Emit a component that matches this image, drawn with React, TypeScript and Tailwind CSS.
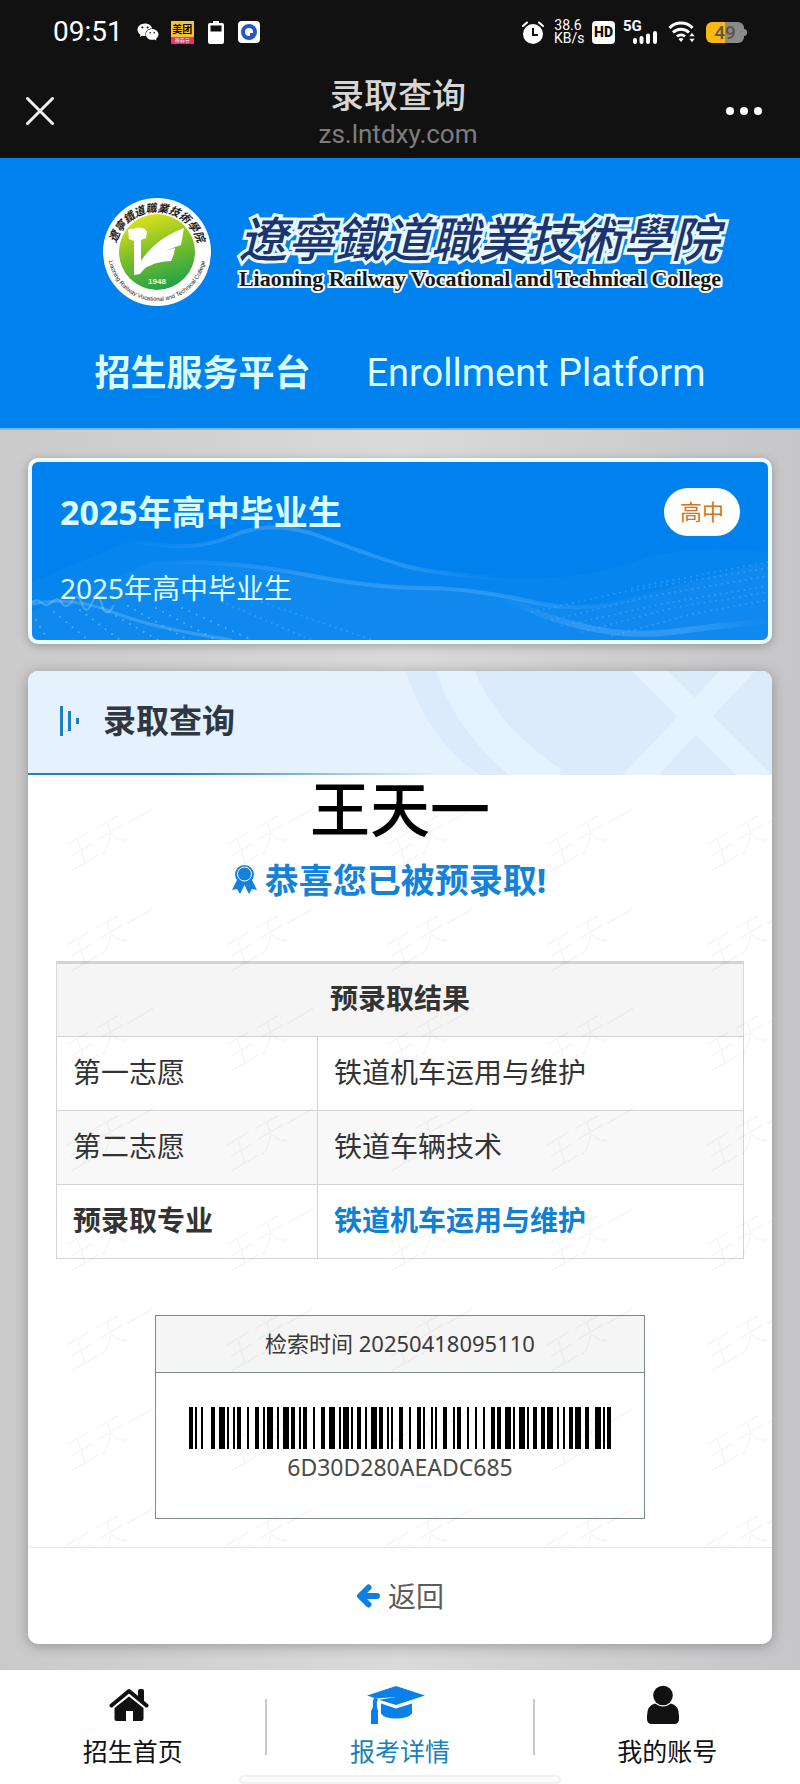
import { FaWeixin } from "react-icons/fa";

const WATERMARK = "王天一";
const SERIAL = "6D30D280AEADC685";

const CODE128: Record<string, string> = {
  "0": "123122",
  "2": "223211",
  "3": "221132",
  "5": "213212",
  "6": "223112",
  "8": "311222",
  A: "111323",
  C: "131321",
  D: "112313",
  E: "132113",
};
const START_B = "211214";
const CHECK = "122132";
const STOP = "2331112";

function getBars(text: string) {
  const widths = START_B + text.split("").map((c) => CODE128[c]).join("") + CHECK + STOP;
  const bars: { x: number; w: number }[] = [];
  let x = 0;
  widths.split("").forEach((d, i) => {
    if (i % 2 === 0) bars.push({ x, w: Number(d) });
    x += Number(d);
  });
  return { bars, total: x };
}

function Barcode({ text }: { text: string }) {
  const { bars, total } = getBars(text);
  return (
    <svg viewBox={`0 0 ${total} 21`} preserveAspectRatio="none" className="w-[422px] h-[42px]" shapeRendering="crispEdges" aria-hidden>
      {bars.map((b) => (
        <rect key={b.x} x={b.x} y="0" width={b.w} height="21" fill="#000" />
      ))}
    </svg>
  );
}

function StatusBar() {
  return (
    <div className="flex items-center justify-between h-16 px-[53px] text-white">
      <div className="flex items-center">
        <span className="text-[28px] leading-8 font-[Roboto]">09:51</span>
        <FaWeixin size={22} className="ml-[14px]" />
        <div className="ml-3 flex flex-col w-[23px] h-[23px] overflow-hidden bg-[#f5c433] text-center text-black">
          <span className="text-[10px] leading-4 font-bold">美团</span>
          <span className="h-[7px] bg-[#e8336d] text-white text-[5px] leading-[7px]">神券节</span>
        </div>
        <svg viewBox="0 0 16 23" className="ml-[14px] w-4 h-[23px]" aria-hidden>
          <path d="M5 0h6v2h3a2 2 0 0 1 2 2v17a2 2 0 0 1-2 2H2a2 2 0 0 1-2-2V4a2 2 0 0 1 2-2h3z" fill="#fff" />
          <rect x="2.500" y="4.500" width="11" height="6" fill="#111" />
        </svg>
        <svg viewBox="0 0 22 22" className="ml-[14px] w-[22px] h-[22px]" aria-hidden>
          <rect width="22" height="22" rx="4" fill="#fff" />
          <circle cx="11" cy="11" r="8" fill="#2458c8" />
          <path d="M11 7a4 4 0 1 1-4 4 4 4 0 0 1 4-4z" fill="#fff" />
          <path d="M12 12h4l-2 3h-2z" fill="#2458c8" />
        </svg>
      </div>

      <div className="flex items-center">
        <svg viewBox="0 0 22 23" className="w-[22px] h-[23px]" aria-hidden>
          <circle cx="11" cy="13" r="10" fill="#fff" />
          <path d="M1 5l4-3.500M21 5l-4-3.500" stroke="#fff" strokeWidth="2" strokeLinecap="round" />
          <path d="M11 7v7h5" stroke="#111" strokeWidth="2" fill="none" />
        </svg>
        <div className="ml-[10px] w-7 text-center text-[14px] leading-[13px] font-[Roboto]">
          <div>38.6</div>
          <div>KB/s</div>
        </div>
        <span className="ml-[10px] w-[23px] h-[23px] rounded bg-white text-center text-[14px] leading-[23px] font-[Roboto] font-black text-[#111]">
          HD
        </span>
        <div className="ml-2 flex items-end w-9 h-[23px]">
          <span className="self-start text-[15px] leading-[11px] font-[Roboto] font-bold">5G</span>
          <svg viewBox="0 0 26 13" className="-ml-[9px] w-[26px] h-[13px] shrink-0" aria-hidden>
            <path d="M2 9v2M8.500 7v4M15 4.500v6.500M22 2v9" stroke="#fff" strokeWidth="4" strokeLinecap="round" />
          </svg>
        </div>
        <svg viewBox="0 0 28 22" className="ml-[9px] w-7 h-[22px]" fill="none" aria-hidden>
          <path d="M1.500 7a16 16 0 0 1 23 0M5 11.500a11.500 11.500 0 0 1 16 0M9 15.500a6 6 0 0 1 8 0" stroke="#fff" strokeWidth="3" />
          <path d="M10.500 18a4 4 0 0 1 5 0L13 21z" fill="#fff" />
          <path d="M21 15.500l3-4 3 4zM21 17.500l3 4 3-4z" fill="#fff" stroke="#111" strokeWidth="0.500" />
        </svg>
        <div className="ml-[10px] flex items-center">
          <div className="w-[38px] h-[21px] rounded-md bg-linear-to-r from-[#fbb90f] from-50% to-[#8b8b8b] to-50% text-center text-[19px] leading-[21px] font-[Roboto] font-medium text-[#5b5548]">
            49
          </div>
          <div className="w-[3px] h-[7px] rounded-r-full bg-[#8b8b8b]" />
        </div>
      </div>
    </div>
  );
}

function TitleBar() {
  return (
    <div className="flex items-center justify-between h-[94px] px-[26px]">
      <button type="button" aria-label="关闭">
        <svg viewBox="0 0 28 28" className="w-7 h-7" aria-hidden>
          <path d="M1.500 1.500l25 25M26.500 1.500l-25 25" stroke="#f0f0f0" strokeWidth="3" strokeLinecap="round" />
        </svg>
      </button>
      <div className="text-center pl-4">
        <h1 className="text-[34px] leading-[46px] font-medium text-[#d6d6d6]">录取查询</h1>
        <p className="text-[26px] leading-8 font-[Roboto] text-[#7d7d7d]">zs.lntdxy.com</p>
      </div>
      <button type="button" aria-label="更多" className="mr-3 flex gap-[6px]">
        <span className="w-2 h-2 rounded-full bg-white" />
        <span className="w-2 h-2 rounded-full bg-white" />
        <span className="w-2 h-2 rounded-full bg-white" />
      </button>
    </div>
  );
}

function SchoolLogo() {
  return (
    <svg viewBox="0 0 108 108" className="w-[108px] h-[108px] shrink-0" aria-hidden>
      <defs>
        <linearGradient id="logo-fill" x1="0.300" y1="0" x2="0.600" y2="1">
          <stop offset="0" stopColor="#e3e21a" />
          <stop offset="0.500" stopColor="#79bf2a" />
          <stop offset="1" stopColor="#1fa04a" />
        </linearGradient>
        <path id="logo-top" d="M12 56a42 42 0 0 1 84 0" />
        <path id="logo-bottom" d="M5 54a49 49 0 0 0 98 0" />
      </defs>
      <circle cx="54" cy="54" r="54" fill="#fff" />
      <circle cx="54" cy="54" r="38" fill="url(#logo-fill)" />
      <text fontSize="11" fontWeight="700" fontStyle="italic" fill="#222">
        <textPath href="#logo-top" startOffset="50%" textAnchor="middle">遼寧鐵道職業技術學院</textPath>
      </text>
      <text fontSize="6" fontFamily="Liberation Sans" fill="#222">
        <textPath href="#logo-bottom" startOffset="50%" textAnchor="middle">
          Liaoning Railway Vocational and Technical College
        </textPath>
      </text>
      {/* hammer head and handle, then the two wing strokes */}
      <path d="M25 32q2-2 5-1 6-3 12 0l2 3-1 6-5 2v21q14-22 43-33l-3 17q-26 8-41 29l-6 1V43l-5-2z" fill="#fff" />
      <path d="M38 73q12-18 34-23-1 8-4 13-17 0-30 10z" fill="#fff" />
      <text x="54" y="86" fontSize="8" fontWeight="700" textAnchor="middle" fontFamily="Liberation Sans" fill="#eaffd0">
        1948
      </text>
    </svg>
  );
}

function Banner() {
  return (
    <header className="h-[272px] bg-[#0082ee] border-b-2 border-[#7db9e6] pt-10">
      <div className="flex items-center justify-center gap-7 pl-6">
        <SchoolLogo />
        <div className="whitespace-nowrap">
          <p className="text-[48px] leading-[54px] font-medium italic text-[#1c3570] [-webkit-text-stroke:6px_#e8faff] [paint-order:stroke_fill]">
            遼寧鐵道職業技術學院
          </p>
          <p className="text-[22px] leading-[26px] font-bold font-[Liberation_Serif] text-[#161616] [-webkit-text-stroke:4px_#f4fbff] [paint-order:stroke_fill]">
            Liaoning Railway Vocational and Technical College
          </p>
        </div>
      </div>
      <div className="mt-11 flex items-center justify-center gap-14 text-[#dcfdff]">
        <h2 className="text-4xl leading-[46px] font-bold">招生服务平台</h2>
        <p className="text-[38px] leading-[46px] font-[Roboto]">Enrollment Platform</p>
      </div>
    </header>
  );
}

function Waves() {
  return (
    <svg viewBox="0 0 736 178" preserveAspectRatio="none" className="absolute inset-0 w-full h-full" fill="none" aria-hidden>
      <defs>
        <linearGradient id="wave-line" x1="0" x2="1" y1="0" y2="0">
          <stop offset="0" stopColor="#5fb1f6" stopOpacity="0" />
          <stop offset="0.300" stopColor="#5fb1f6" stopOpacity="0.400" />
          <stop offset="0.700" stopColor="#5fb1f6" stopOpacity="0.400" />
          <stop offset="1" stopColor="#5fb1f6" stopOpacity="0" />
        </linearGradient>
      </defs>
      <path d="M0 120L100 78Q160 92 200 74T290 75 370 103 470 116 600 100 736 90V178H0z" fill="#3c9df0" fillOpacity="0.120" />
      <path d="M0 150L120 100Q200 98 270 112T390 126 500 140 620 130L736 100V178H0z" fill="#3c9df0" fillOpacity="0.180" />
      <path d="M100 78Q160 92 200 74T290 75 370 103 470 116" stroke="url(#wave-line)" strokeWidth="4" />
      <path d="M120 100Q200 98 270 112T390 126 500 140 620 130" stroke="url(#wave-line)" strokeWidth="4" />
      <path d="M470 135Q560 180 640 170T736 160" stroke="url(#wave-line)" strokeWidth="6" />
      <path d="M0 142Q40 134 80 150T200 178" stroke="#6cbbf8" strokeOpacity="0.400" strokeWidth="3" />
      <path d="M0 140q6-4 10 1t10-1 10 1 10-2 10 3 10-1 10 2 12 0" stroke="#8fd0fb" strokeOpacity="0.400" strokeWidth="2" />
      <g stroke="#8fd0fb" strokeOpacity="0.550" strokeWidth="2" strokeLinecap="round" strokeDasharray="0 8">
        <path d="M4 158l12 20M22 150l34 28M48 148l40 30M70 146l56 32M96 144l60 34M124 146l60 32M150 146l70 32" />
      </g>
      <g stroke="#7cc3f8" strokeOpacity="0.300" strokeWidth="2" strokeLinecap="round" strokeDasharray="0 6">
        <path d="M190 140l90 38M230 140l110 38M500 150l90-20 146-24M520 158l100-24 116-20M530 164l100-22 106-18M550 170l90-24 96-16M580 174l80-22 76-14M600 126l136-26" />
      </g>
    </svg>
  );
}

function BatchCard() {
  return (
    <section className="relative overflow-hidden h-[186px] rounded-[10px] border-4 border-[#f0fbff] bg-[#0082ee] shadow-[0_2px_10px_rgba(0,0,0,0.25)]">
      <Waves />
      <div className="relative px-7 pt-[26px] text-[#dcfdff]">
        <div className="flex items-center justify-between">
          <h3 className="text-[34px] leading-[48px] font-bold">2025年高中毕业生</h3>
          <span className="h-12 px-4 rounded-full bg-white text-[22px] leading-[46px] text-[#cf7325]">高中</span>
        </div>
        <p className="mt-8 text-[28px] leading-10">2025年高中毕业生</p>
      </div>
    </section>
  );
}

function CardHeader() {
  return (
    <div className="relative h-[104px] overflow-hidden bg-[#e6f1fe]">
      <svg viewBox="0 0 744 104" preserveAspectRatio="xMaxYMid slice" className="absolute inset-0 w-full h-full" fill="none" aria-hidden>
        <path d="M378 0Q400 70 452 104H744V0z" fill="#dbebfb" />
        <path d="M424 -10Q444 60 524 114" stroke="#e5f2ff" strokeWidth="36" />
        <path d="M612 -10L740 118M722 -14L600 118" stroke="#e5f2ff" strokeWidth="26" />
      </svg>
      <div className="relative flex items-center gap-[23px] h-full px-8 pb-1">
        <svg viewBox="0 0 20 30" className="w-5 h-[30px]" fill="#1a80c4" aria-hidden>
          <rect width="3" height="30" />
          <rect x="8" y="5" width="3" height="20" />
          <rect x="16" y="12" width="3" height="6" />
        </svg>
        <h3 className="text-[33px] leading-[46px] font-bold text-[#2f3742]">录取查询</h3>
      </div>
      <div className="absolute inset-x-0 bottom-0 h-[2px] bg-linear-to-r from-[#2382bd] from-20% to-transparent to-55%" />
    </div>
  );
}

function Watermarks() {
  return (
    <div
      className="pointer-events-none absolute inset-0 overflow-hidden pt-[10px] grid grid-cols-[repeat(5,160px)] auto-rows-[100px] select-none"
      aria-hidden
    >
      {Array.from({ length: 40 }, (_, i) => (
        <span key={i} className="flex items-center justify-center">
          <span className="-rotate-30 text-[34px] italic text-black/3">{WATERMARK}</span>
        </span>
      ))}
    </div>
  );
}

function ResultTable() {
  return (
    <table className="w-full border-collapse border border-[#d8d8d8] text-[28px] leading-10 text-[#333]">
      <thead>
        <tr className="h-[74px] bg-[#f5f5f5] border-t-[3px] border-[#d3d3d3]">
          <th colSpan={2} scope="colgroup" className="pb-1 font-bold">
            预录取结果
          </th>
        </tr>
      </thead>
      <tbody>
        <tr className="h-[74px]">
          <td className="w-[38%] px-4 pb-1 border border-[#d4d4d4]">第一志愿</td>
          <td className="px-4 pb-1 border border-[#d4d4d4]">铁道机车运用与维护</td>
        </tr>
        <tr className="h-[74px] bg-[#f8f8f8]">
          <td className="px-4 pb-1 border border-[#d4d4d4]">第二志愿</td>
          <td className="px-4 pb-1 border border-[#d4d4d4]">铁道车辆技术</td>
        </tr>
        <tr className="h-[74px] font-bold">
          <td className="px-4 pb-1 border border-[#d4d4d4]">预录取专业</td>
          <td className="px-4 pb-1 border border-[#d4d4d4] text-[#1080d4]">铁道机车运用与维护</td>
        </tr>
      </tbody>
    </table>
  );
}

function ResultCard() {
  return (
    <section className="overflow-hidden rounded-[10px] bg-white shadow-[0_2px_14px_rgba(0,0,0,0.28)]">
      <CardHeader />
      <div className="relative px-7 pb-7 border-b border-[#e6e6e6]">
        <h2 className="text-center text-6xl leading-[68px] font-medium text-black">王天一</h2>
        <div className="flex items-center justify-center gap-2 pt-3 pr-[22px] text-[#1382d8]">
          <svg viewBox="0 0 25 30" className="w-[25px] h-[30px]" fill="currentColor" aria-hidden>
            <path d="M5 15L0 25l5-1 3 5 4.500-9 4.500 9 3-5 5 1-5-10z" />
            <circle cx="12.500" cy="9.500" r="9.500" />
            <circle cx="12.500" cy="9" r="7" fill="none" stroke="#fff" strokeWidth="1" />
          </svg>
          <p className="text-[34px] leading-[50px] font-bold">恭喜您已被预录取!</p>
        </div>
        <div className="mt-14">
          <ResultTable />
        </div>
        <div className="mt-14 mx-auto w-[490px] h-[204px] border border-[#7f888a]">
          <p className="h-[57px] border-b border-[#7f888a] bg-[#f5f5f6] text-center text-[22px] leading-[54px] text-[#3a3a3a]">
            检索时间 20250418095110
          </p>
          <div className="flex flex-col items-center pt-[34px]">
            <Barcode text={SERIAL} />
            <p className="text-[23px] leading-9 text-[#4a4a4a]">{SERIAL}</p>
          </div>
        </div>
        <Watermarks />
      </div>
      <div className="flex justify-center py-7">
        <button type="button" className="flex items-center gap-2 text-[28px] leading-10 text-[#5c5c5c]">
          <svg viewBox="0 0 24 24" className="w-6 h-6" fill="none" stroke="#0b80e0" strokeWidth="6" strokeLinecap="round" strokeLinejoin="round" aria-hidden>
            <path d="M12.500 3.500L4 12l8.500 8.500M5 12h16" />
          </svg>
          返回
        </button>
      </div>
    </section>
  );
}

function TabBar() {
  return (
    <nav className="bg-white text-[25px] leading-9 text-[#111]">
      <div className="flex items-center h-[105px] pt-[9px]">
        <a href="#home" className="flex-1 flex flex-col items-center">
          <svg viewBox="0 0 40 40" className="w-10 h-10 mr-2" fill="currentColor" aria-hidden>
            <path d="M29 12V6a2 2 0 0 1 2-2h2a2 2 0 0 1 2 2v13z" />
            <path d="M2.500 20.500L20 6l17.500 14.500" fill="none" stroke="currentColor" strokeWidth="4" strokeLinecap="round" strokeLinejoin="round" />
            <path d="M20 11.500L34.500 23v11a2 2 0 0 1-2 2H24V26h-7v10H7.500a2 2 0 0 1-2-2V23z" />
          </svg>
          <span className="mt-2">招生首页</span>
        </a>
        <span className="w-[2px] h-14 bg-[#c9c9c9]" />
        <a href="#detail" className="flex-1 flex flex-col items-center text-[#1782bb]">
          <svg viewBox="0 0 58 40" className="w-[58px] h-10 mr-2" fill="#0b80e8" aria-hidden>
            <path d="M0 10.500L29 1l29 9.500-29 9.500-17-5.200 17-2.800-20 1.500z" />
            <path d="M7 12.500l4 1.500q-2 4-1 8l1 4v13H4V26l2-4q-1-5 1-9.500z" />
            <path d="M14 18.500l15 5 16-5v10q-4 5-16 5t-15-5z" />
          </svg>
          <span className="mt-2">报考详情</span>
        </a>
        <span className="w-[2px] h-14 bg-[#c9c9c9]" />
        <a href="#account" className="flex-1 flex flex-col items-center">
          <svg viewBox="0 0 34 40" className="w-[34px] h-10 mr-2" fill="currentColor" aria-hidden>
            <circle cx="17" cy="10.500" r="9.800" />
            <path d="M9 18.500q8 6 16 0 8 2 8 12.500v3q0 5-5 5H6q-5 0-5-5v-3Q1 20.500 9 18.500z" />
          </svg>
          <span className="mt-2">我的账号</span>
        </a>
      </div>
      <div className="mx-auto w-[322px] h-[9px] rounded-full border-2 border-[#f0f0f0] bg-[#fafafa]" />
    </nav>
  );
}

export default function App() {
  return (
    <div className="font-[Noto_Sans,Noto_Sans_CJK_SC,sans-serif] bg-[#cbcbcb]">
      <div className="bg-[#111]">
        <StatusBar />
        <TitleBar />
      </div>
      <Banner />
      <main className="flex flex-col gap-[27px] px-7 pt-7 pb-[26px] bg-linear-to-r from-[#cacaca] via-[#dadada] to-[#c6c5c7]">
        <BatchCard />
        <ResultCard />
      </main>
      <TabBar />
    </div>
  );
}
